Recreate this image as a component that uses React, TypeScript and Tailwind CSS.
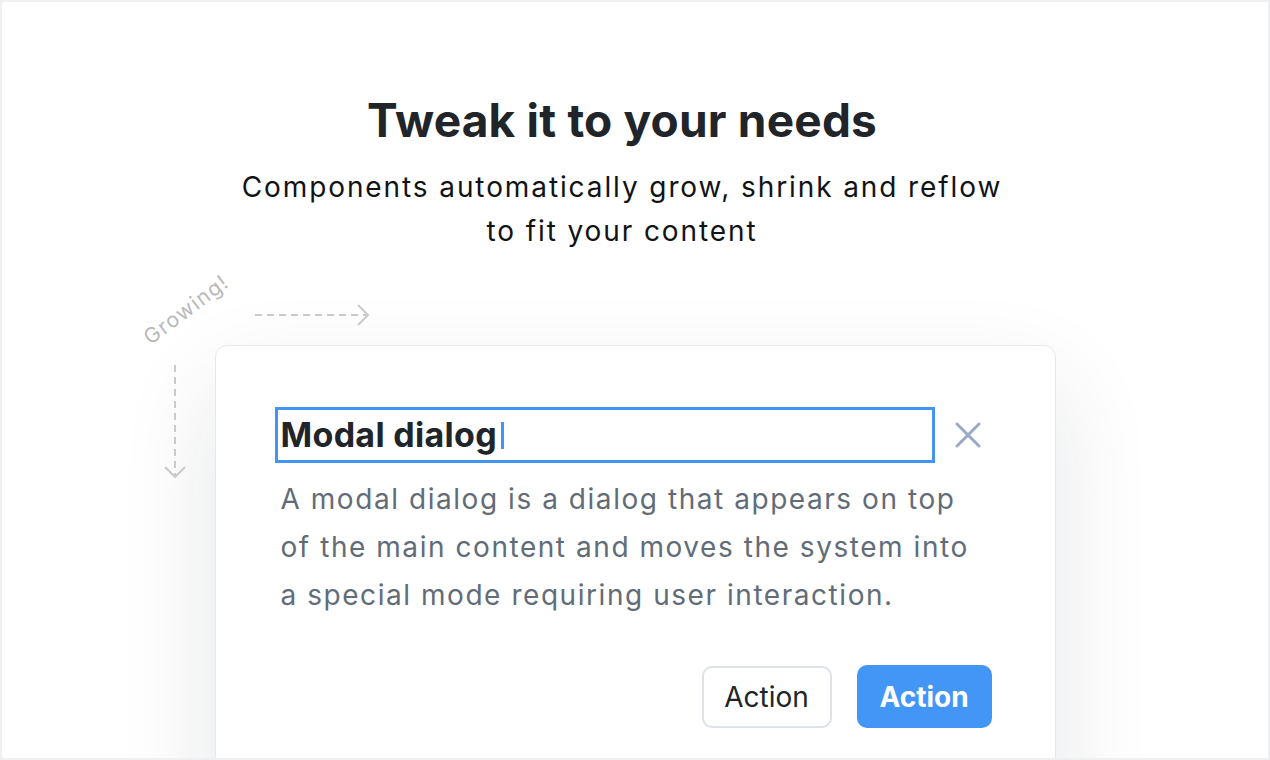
import React from "react";

export default function App() {
  return (
    <div className="relative w-[1270px] h-[760px] overflow-hidden bg-white border-2 border-[#eff0f2] font-['Inter',sans-serif]">
      {/* Header */}
      <div className="pt-[90px] pr-[26px] text-center">
        <h1 className="text-[46px] leading-[56px] font-bold tracking-[0.2px] text-[#212529]">
          Tweak it to your needs
        </h1>
        <p className="mt-[17px] text-[28px] leading-[44px] tracking-[1.9px] text-[#111315]">
          Components automatically grow, shrink and reflow
          <br />
          to fit your content
        </p>
      </div>

      {/* Decorations */}
      <div className="absolute left-[144px] top-[327px] -rotate-[37deg] origin-left text-[21px] leading-none tracking-[1.4px] text-[#b9b9b9] whitespace-nowrap">
        Growing!
      </div>
      <svg className="absolute left-[250px] top-[300px]" width="122" height="26" viewBox="0 0 122 26">
        <line x1="3" y1="13" x2="115" y2="13" stroke="#cacaca" strokeWidth="2" strokeDasharray="7 5" />
        <polyline points="106,3 116,13 106,23" fill="none" stroke="#cacaca" strokeWidth="2" />
      </svg>
      <svg className="absolute left-[160px] top-[360px]" width="26" height="120" viewBox="0 0 26 120">
        <line x1="13" y1="3" x2="13" y2="114" stroke="#cacaca" strokeWidth="2" strokeDasharray="7 5" />
        <polyline points="3,105 13,115 23,105" fill="none" stroke="#cacaca" strokeWidth="2" />
      </svg>

      {/* Modal */}
      <div className="mx-auto mt-[92px] w-[841px] h-[520px] rounded-[12px] border border-[#e6e8eb] bg-white shadow-[0_40px_100px_rgba(20,30,50,0.11)] pt-[61px] pl-[59px]">
        <div className="flex items-center">
          <div className="w-[660px] h-[56px] border-[3px] border-[#4394f5] pl-[3px] flex items-center">
            <span className="text-[34px] font-bold text-[#212529] tracking-[0.3px] leading-none">Modal dialog</span>
            <span className="ml-[4px] inline-block w-[3px] h-[27px] bg-[#4394f5]" />
          </div>
          <svg className="ml-[20px]" width="26" height="26" viewBox="0 0 26 26">
            <line x1="2" y1="2" x2="24" y2="24" stroke="#9aa9c6" strokeWidth="3" strokeLinecap="round" />
            <line x1="24" y1="2" x2="2" y2="24" stroke="#9aa9c6" strokeWidth="3" strokeLinecap="round" />
          </svg>
        </div>
        <p className="mt-[12px] pl-[6px] text-[28px] leading-[48px] tracking-[1.55px] text-[#626c78] whitespace-nowrap">
          A modal dialog is a dialog that appears on top
          <br />
          of the main content and moves the system into
          <br />
          a special mode requiring user interaction.
        </p>
        <div className="mt-[47px] flex justify-end gap-[25px] w-[717px]">
          <button className="w-[130px] h-[62px] rounded-[10px] border-2 border-[#dee2e6] bg-white text-[28px] text-[#212529]">
            Action
          </button>
          <button className="w-[135px] h-[63px] -mt-[1px] rounded-[10px] bg-[#4496f6] text-[28px] font-bold text-white">
            Action
          </button>
        </div>
      </div>
    </div>
  );
}
